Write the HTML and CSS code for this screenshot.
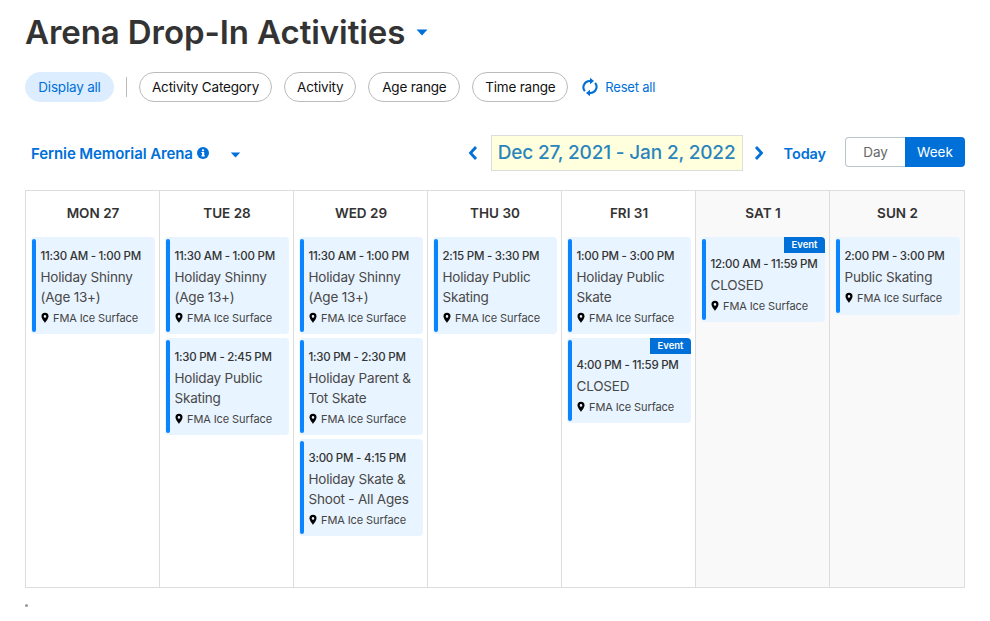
FILE: index.html
```html
<!DOCTYPE html>
<html lang="en">
<head>
<meta charset="utf-8">
<title>Arena Drop-In Activities</title>
<link rel="stylesheet" href="styles.css">
</head>
<body>
<svg class="defs" width="0" height="0" aria-hidden="true">
  <symbol id="pin" viewBox="0 0 10 13"><path fill-rule="evenodd" d="M5 0a4.400 4.400 0 0 0-4.400 4.400C.6 7.400 5 12.600 5 12.600s4.400-5.200 4.400-8.200A4.400 4.400 0 0 0 5 0zm0 2.900a1.600 1.600 0 1 1 0 3.200 1.600 1.600 0 0 1 0-3.200z"/></symbol>
  <symbol id="caret" viewBox="0 0 12 7"><path d="M.5.5h11L6 6.500z"/></symbol>
</svg>
<header class="title-row">
  <h1 class="title">Arena Drop-In Activities</h1>
  <svg class="caret caret-title"><use href="#caret"/></svg>
</header>
<div class="filters">
  <button class="chip chip-active">Display all</button>
  <span class="divider"></span>
  <button class="chip">Activity Category</button>
  <button class="chip">Activity</button>
  <button class="chip">Age range</button>
  <button class="chip">Time range</button>
  <span class="reset">
    <svg class="reset-icon" viewBox="0 0 16 18" fill="none" stroke="#0070d9" stroke-width="2.100"><path d="M2.900 13.200A6.200 6.200 0 0 1 8.500 3.100"/><path d="M13.100 4.800A6.200 6.200 0 0 1 7.500 14.900"/><path d="M8 -.2l4 3.300-4 3.200z" fill="#0070d9" stroke="none"/><path d="M8 18.200l-4-3.300 4-3.200z" fill="#0070d9" stroke="none"/></svg>
    Reset all
  </span>
</div>
<div class="toolbar">
  <div class="facility">
    <span>Fernie Memorial Arena</span>
    <svg class="info" viewBox="0 0 12 12"><circle cx="6" cy="6" r="6" fill="#0070d9"/><rect x="5" y="5" width="2.200" height="4.200" fill="#fff"/><rect x="4.300" y="8.300" width="3.600" height="1.100" fill="#fff"/><rect x="4.300" y="5" width="2.500" height="1" fill="#fff"/><circle cx="6" cy="3.300" r="1.150" fill="#fff"/></svg>
    <svg class="caret caret-facility"><use href="#caret"/></svg>
  </div>
  <div class="nav">
    <svg class="chev" viewBox="0 0 10 16"><path d="M8 2L2.500 8 8 14" /></svg>
    <div class="range">Dec 27, 2021 - Jan 2, 2022</div>
    <svg class="chev" viewBox="0 0 10 16"><path d="M2 2l5.500 6L2 14" /></svg>
    <span class="today">Today</span>
    <div class="switch"><span class="seg">Day</span><span class="seg seg-on">Week</span></div>
  </div>
</div>
<main class="calendar">
  <section class="day">
    <h2 class="day-name">MON 27</h2>
    <article class="card"><p class="time">11:30 AM - 1:00 PM</p><p class="name">Holiday Shinny<br>(Age 13+)</p><p class="loc"><svg class="pin"><use href="#pin"/></svg>FMA Ice Surface</p></article>
  </section>
  <section class="day">
    <h2 class="day-name">TUE 28</h2>
    <article class="card"><p class="time">11:30 AM - 1:00 PM</p><p class="name">Holiday Shinny<br>(Age 13+)</p><p class="loc"><svg class="pin"><use href="#pin"/></svg>FMA Ice Surface</p></article>
    <article class="card"><p class="time">1:30 PM - 2:45 PM</p><p class="name">Holiday Public<br>Skating</p><p class="loc"><svg class="pin"><use href="#pin"/></svg>FMA Ice Surface</p></article>
  </section>
  <section class="day">
    <h2 class="day-name">WED 29</h2>
    <article class="card"><p class="time">11:30 AM - 1:00 PM</p><p class="name">Holiday Shinny<br>(Age 13+)</p><p class="loc"><svg class="pin"><use href="#pin"/></svg>FMA Ice Surface</p></article>
    <article class="card"><p class="time">1:30 PM - 2:30 PM</p><p class="name">Holiday Parent &amp;<br>Tot Skate</p><p class="loc"><svg class="pin"><use href="#pin"/></svg>FMA Ice Surface</p></article>
    <article class="card"><p class="time">3:00 PM - 4:15 PM</p><p class="name">Holiday Skate &amp;<br>Shoot - All Ages</p><p class="loc"><svg class="pin"><use href="#pin"/></svg>FMA Ice Surface</p></article>
  </section>
  <section class="day">
    <h2 class="day-name">THU 30</h2>
    <article class="card"><p class="time">2:15 PM - 3:30 PM</p><p class="name">Holiday Public<br>Skating</p><p class="loc"><svg class="pin"><use href="#pin"/></svg>FMA Ice Surface</p></article>
  </section>
  <section class="day">
    <h2 class="day-name">FRI 31</h2>
    <article class="card"><p class="time">1:00 PM - 3:00 PM</p><p class="name">Holiday Public<br>Skate</p><p class="loc"><svg class="pin"><use href="#pin"/></svg>FMA Ice Surface</p></article>
    <article class="card card-event"><span class="badge">Event</span><p class="time">4:00 PM - 11:59 PM</p><p class="name">CLOSED</p><p class="loc"><svg class="pin"><use href="#pin"/></svg>FMA Ice Surface</p></article>
  </section>
  <section class="day day-off">
    <h2 class="day-name">SAT 1</h2>
    <article class="card card-event"><span class="badge">Event</span><p class="time">12:00 AM - 11:59 PM</p><p class="name">CLOSED</p><p class="loc"><svg class="pin"><use href="#pin"/></svg>FMA Ice Surface</p></article>
  </section>
  <section class="day day-off">
    <h2 class="day-name">SUN 2</h2>
    <article class="card card-short"><p class="time">2:00 PM - 3:00 PM</p><p class="name">Public Skating</p><p class="loc"><svg class="pin"><use href="#pin"/></svg>FMA Ice Surface</p></article>
  </section>
</main>
<div class="dot"></div>
</body>
</html>
```

FILE: styles.css
```css
* { box-sizing: border-box; }
html, body { margin: 0; padding: 0; }
body {
  width: 990px;
  height: 621px;
  overflow: hidden;
  background: #fff;
  font-family: "Inter", "Liberation Sans", sans-serif;
  color: #333;
  padding: 0 25px;
}
.defs { position: absolute; }
p, h1, h2 { margin: 0; }

.title-row { display: flex; align-items: center; height: 72px; padding-bottom: 8px; }
.title { font-size: 33px; font-weight: 600; line-height: 40px; color: #333; letter-spacing: -.080px; }
.caret { fill: #0070d9; }
.caret-title { width: 12px; height: 7px; margin-left: 11px; margin-top: 1px; }

.filters { display: flex; align-items: center; height: 30px; }
.chip {
  height: 30px;
  padding: 0 12px;
  border: 1px solid #bbb;
  border-radius: 15px;
  background: #fff;
  color: #111;
  font: 400 13.500px "Inter", sans-serif;
  letter-spacing: -.200px;
  margin-right: 12px;
}
.chip-active { width: 89px; padding: 0; background: #dcedff; border-color: #dcedff; color: #0070d9; margin-right: 12px; }
.chip:nth-of-type(4) { width: 92px; padding: 0; }
.chip:nth-of-type(5) { width: 96px; padding: 0; }
.divider { width: 1px; height: 20px; background: #bbb; margin-right: 12px; }
.reset { display: flex; align-items: center; color: #0070d9; font-size: 13px; letter-spacing: -.200px; margin-left: 2px; }
.reset-icon { width: 16px; height: 18px; margin-right: 7px; overflow: visible; }

.toolbar { display: flex; justify-content: space-between; align-items: center; height: 36px; margin-top: 33px; }
.facility { display: flex; align-items: center; padding-left: 6px; color: #0070d9; font-size: 15px; font-weight: 600; letter-spacing: -.100px; }
.info { width: 12px; height: 12px; margin-left: 4px; }
.caret-facility { width: 11px; height: 6px; margin-left: 21px; margin-top: 3px; }
.nav { display: flex; align-items: center; }
.chev { width: 10px; height: 16px; fill: none; stroke: #0070d9; stroke-width: 2.800; }
.range {
  width: 252px;
  height: 36px;
  line-height: 33px;
  margin: 0 11px 0 13px;
  background: #ffd;
  border: 1px solid #ddd;
  color: #2a85bd;
  font-size: 19px;
  font-weight: 500;
  letter-spacing: -.170px;
  text-align: center;
  white-space: nowrap;
}
.today { color: #0070d9; font-size: 14.500px; font-weight: 600; margin: 0 19px 0 20px; letter-spacing: -.100px; }
.switch { display: flex; height: 30px; width: 120px; margin-bottom: 2px; font-size: 13.500px; }
.seg { flex: 1 1 60px; display: flex; align-items: center; justify-content: center; }
.seg:first-child { border: 1px solid #bbc5cc; border-right: 0; border-radius: 4px 0 0 4px; color: #666; }
.seg-on { flex-basis: 60px; background: #0070d9; color: #fff; border-radius: 0 4px 4px 0; }

.calendar {
  display: grid;
  grid-template-columns: repeat(6, 134px) 135px;
  height: 398px;
  margin-top: 19px;
  border: 1px solid #ddd;
  border-right: 0;
}
.day { border-right: 1px solid #ddd; padding: 0 4px 0 5px; display: flex; flex-direction: column; gap: 4px; }
.day-off { background: #f9f9f9; }
.day-name { height: 42px; padding-top: 14px; line-height: 17px; text-align: center; font-size: 13.500px; font-weight: 600; color: #333; }
.card {
  position: relative;
  height: 97px;
  padding: 11px 6px 0 9.500px;
  background: #e8f4ff;
  border-radius: 4px;
  flex: none;
}
.card::before {
  content: "";
  position: absolute;
  left: 1px; top: 2px; bottom: 2px;
  width: 4px;
  background: #0a84ff;
  border-radius: 2px;
}
.card-event { height: 85px; padding-top: 19px; }
.card-short { height: 78px; }
.badge {
  position: absolute;
  top: 0; right: 0;
  height: 16px;
  width: 41px;
  line-height: 15px;
  text-align: center;
  background: #0070d9;
  color: #fff;
  font-size: 9.500px;
  font-weight: 600;
  border-radius: 0 4px 0 0;
}
.time { font-size: 11.500px; line-height: 17px; font-weight: 500; color: #333; white-space: nowrap; letter-spacing: -.250px; }
.name { font-size: 13.500px; line-height: 20px; margin-top: 2px; color: #484848; white-space: nowrap; letter-spacing: -.200px; }
.loc { display: flex; align-items: center; font-size: 11px; line-height: 16px; margin-top: 3px; color: #444; white-space: nowrap; letter-spacing: -.100px; }
.pin { width: 8px; height: 12px; margin-right: 4.500px; fill: #000; flex: none; }
.dot { width: 3px; height: 3px; border-radius: 50%; background: #999; margin-top: 16px; }
```
